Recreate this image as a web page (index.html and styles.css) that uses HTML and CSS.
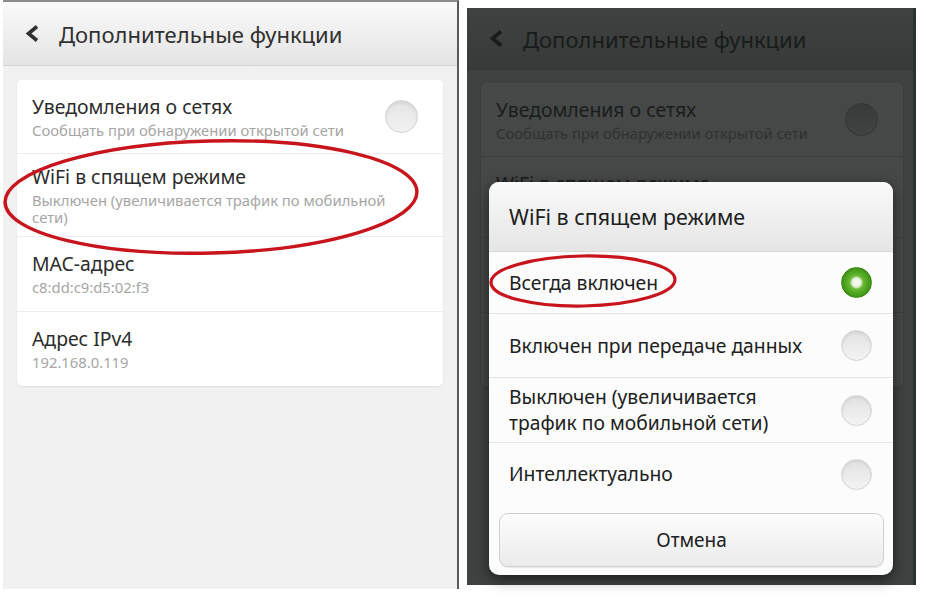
FILE: index.html
```html
<!DOCTYPE html>
<html lang="ru">
<head>
<meta charset="utf-8">
<title>WiFi в спящем режиме</title>
<link rel="stylesheet" href="styles.css">
</head>
<body>
<div class="stage">
  <section class="phone phone-light">
    <header class="bar">
      <svg class="back" width="15" height="17" viewBox="0 0 15 17"><polyline points="12,1.5 3.5,8.5 12,15.5" fill="none" stroke="currentColor" stroke-width="3.6" stroke-linejoin="miter"/></svg>
      <h1 class="bar-title">Дополнительные функции</h1>
    </header>
    <div class="card">
      <div class="row r1">
        <div class="text"><div class="title">Уведомления о сетях</div><div class="sub">Сообщать при обнаружении открытой сети</div></div>
        <span class="toggle"></span>
      </div>
      <div class="row r2">
        <div class="text"><div class="title">WiFi в спящем режиме</div><div class="sub wrap">Выключен (увеличивается трафик по мобильной сети)</div></div>
      </div>
      <div class="row r3">
        <div class="text"><div class="title">MAC-адрес</div><div class="sub">c8:dd:c9:d5:02:f3</div></div>
      </div>
      <div class="row r4">
        <div class="text"><div class="title">Адрес IPv4</div><div class="sub">192.168.0.119</div></div>
      </div>
    </div>
    <svg class="mark" viewBox="0 0 454 587" width="454" height="587"><ellipse cx="208" cy="195" rx="206" ry="56" transform="rotate(-1.5 208 195)" fill="none" stroke="#c8141c" stroke-width="3.4"/></svg>
  </section>

  <section class="phone phone-dark">
    <header class="bar">
      <svg class="back" width="15" height="17" viewBox="0 0 15 17"><polyline points="12,1.5 3.5,8.5 12,15.5" fill="none" stroke="currentColor" stroke-width="3.6" stroke-linejoin="miter"/></svg>
      <h1 class="bar-title">Дополнительные функции</h1>
    </header>
    <div class="card">
      <div class="row r1">
        <div class="text"><div class="title">Уведомления о сетях</div><div class="sub">Сообщать при обнаружении открытой сети</div></div>
        <span class="toggle"></span>
      </div>
      <div class="row r2">
        <div class="text"><div class="title">WiFi в спящем режиме</div></div>
      </div>
      <div class="row r3"></div>
      <div class="row r4"></div>
    </div>

    <div class="dialog">
      <div class="dlg-head">WiFi в спящем режиме</div>
      <div class="opt o1"><span>Всегда включен</span><span class="radio on"></span></div>
      <div class="opt o2"><span>Включен при передаче данных</span><span class="radio"></span></div>
      <div class="opt o3"><span>Выключен (увеличивается<br>трафик по мобильной сети)</span><span class="radio"></span></div>
      <div class="opt o4"><span>Интеллектуально</span><span class="radio"></span></div>
      <div class="dlg-foot"><button class="cancel" type="button">Отмена</button></div>
    </div>
    <svg class="mark" viewBox="0 0 446 577" width="446" height="577"><ellipse cx="116" cy="273" rx="92" ry="25" transform="rotate(-1 116 273)" fill="none" stroke="#c8141c" stroke-width="3.2"/></svg>
  </section>
</div>
</body>
</html>
```

FILE: styles.css
```css
html, body {
  margin: 0;
  padding: 0;
  background: #ffffff;
}

body {
  font-family: "Noto Sans", "Open Sans", "DejaVu Sans", sans-serif;
}

.stage {
  display: flex;
  align-items: flex-start;
  width: 926px;
  height: 600px;
  overflow: hidden;
}

.phone {
  position: relative;
  display: flex;
  flex-direction: column;
  box-sizing: content-box;
}

.phone-light {
  margin-left: 3px;
  width: 454px;
  height: 587px;
  border-top: 2px solid #8c8c8c;
  border-right: 2px solid #5a5a5a;
  background: #f1f1f1;
}

.phone-dark {
  margin-left: 8px;
  margin-top: 8px;
  width: 446px;
  height: 577px;
  border-right: 3px solid #2c3230;
  background: #3f4241;
}

/* header bar */
.bar {
  display: flex;
  align-items: center;
  gap: 19px;
  padding-left: 22px;
  box-sizing: border-box;
  flex: none;
}

.phone-light .bar {
  height: 64px;
  background: linear-gradient(#fafafa, #e4e4e4);
  border-bottom: 1px solid #d4d4d4;
  color: #303030;
}

.phone-dark .bar {
  height: 62px;
  background: linear-gradient(#3f4241, #373a39);
  border-bottom: 1px solid #333635;
  color: #191b1a;
}

.back {
  flex: none;
  display: block;
}

.bar-title {
  margin: 0;
  font-size: 22px;
  font-weight: 400;
  line-height: 30px;
}

/* settings card */
.card {
  border-radius: 5px;
  overflow: hidden;
  flex: none;
}

.phone-light .card {
  margin: 14px 14px 0 14px;
  background: #ffffff;
  box-shadow: 0 1px 2px rgba(0, 0, 0, 0.08);
}

.phone-dark .card {
  margin: 13px 10px 0 14px;
  background: #454847;
  box-shadow: 0 1px 2px rgba(0, 0, 0, 0.15);
}

.row {
  display: flex;
  align-items: center;
  box-sizing: border-box;
  padding: 10px 15px 10px 15px;
  min-height: 74px;
}

.phone-light .row { border-bottom: 1px solid #ececec; }
.phone-dark .row { border-bottom: 1px solid #3d403f; }
.row.r4 { border-bottom: none; }
.row.r3 { min-height: 75px; }
.phone-dark .row.r2 { min-height: 81px; align-items: flex-start; padding-top: 14px; }

.text {
  flex: 1;
  min-width: 0;
}

.title {
  font-size: 19.4px;
  line-height: 26px;
}

.sub {
  font-size: 14.8px;
  line-height: 20px;
}

.sub.wrap {
  max-width: 362px;
  line-height: 17px;
  padding-top: 2px;
}

.phone-light .title { color: #2c2c2c; }
.phone-light .sub { color: #a6a6a6; }
.phone-dark .title { color: #1a1c1b; }
.phone-dark .sub { color: #2e3130; }

.toggle {
  flex: none;
  width: 33px;
  height: 33px;
  margin-right: 10px;
  border-radius: 50%;
  box-sizing: border-box;
}

.phone-light .toggle {
  background: linear-gradient(#e4e4e4, #f2f2f2);
  border: 1px solid #d2d2d2;
  box-shadow: inset 0 2px 3px rgba(0, 0, 0, 0.08);
}

.phone-dark .toggle {
  background: linear-gradient(#393b3a, #404342);
  border: 1px solid #323534;
}

/* red marks */
.mark {
  position: absolute;
  left: 0;
  top: 0;
  pointer-events: none;
  z-index: 5;
}

/* dialog */
.dialog {
  position: absolute;
  left: 22px;
  top: 174px;
  width: 404px;
  background: #fcfcfc;
  border-radius: 10px;
  overflow: hidden;
  box-shadow: 0 4px 14px rgba(0, 0, 0, 0.55);
  z-index: 2;
}

.dlg-head {
  height: 70px;
  box-sizing: border-box;
  display: flex;
  align-items: center;
  padding-left: 20px;
  background: linear-gradient(#fafafa, #e5e5e5);
  border-bottom: 1px solid #d8d8d8;
  font-size: 21.4px;
  color: #202020;
}

.opt {
  display: flex;
  align-items: center;
  justify-content: space-between;
  box-sizing: border-box;
  padding: 0 21px 0 20px;
  border-bottom: 1px solid #e4e4e4;
  font-size: 19.3px;
  line-height: 26px;
  color: #202020;
}

.o1 { height: 62px; }
.o2 { height: 64px; }
.o3 { height: 65px; }
.o4 { height: 62px; border-bottom: none; }

.radio {
  flex: none;
  width: 31px;
  height: 31px;
  border-radius: 50%;
  box-sizing: border-box;
  background: linear-gradient(#e2e2e2, #f3f3f3);
  border: 1px solid #d4d4d4;
  box-shadow: inset 0 2px 3px rgba(0, 0, 0, 0.07);
}

.radio.on {
  border: 1px solid #37870f;
  background: radial-gradient(circle at 50% 50%, #f7faf4 0, #eef5e8 3.5px, #d3e8c3 5px, #6fbd3c 6.5px, #57ad25 9.5px, #3f9317 14.5px);
  box-shadow: none;
}

.dlg-foot {
  padding: 8px 9px 8px 10px;
}

.cancel {
  display: block;
  width: 100%;
  height: 54px;
  margin: 0;
  border: 1px solid #d0d0d0;
  border-radius: 9px;
  background: linear-gradient(#fdfdfd, #ebebeb);
  box-shadow: 0 1px 1px rgba(0, 0, 0, 0.08);
  font-family: "Noto Sans", "Open Sans", "DejaVu Sans", sans-serif;
  font-size: 19px;
  color: #202020;
  padding: 0;
}
```
